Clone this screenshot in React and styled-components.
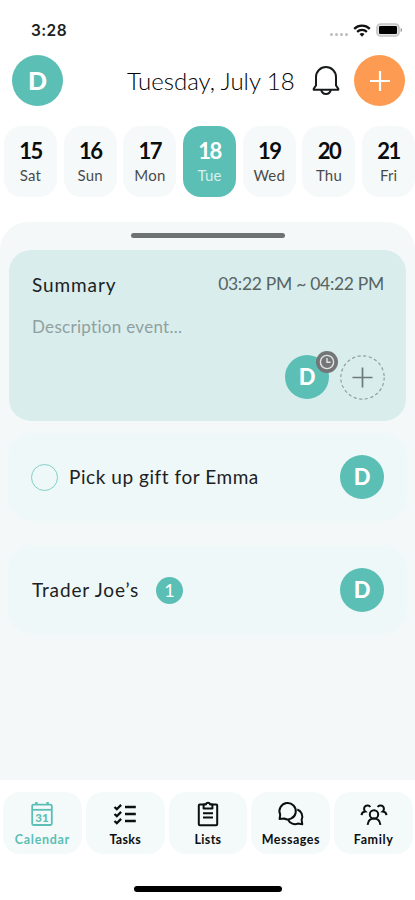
import React from "react";
import styled, { createGlobalStyle } from "styled-components";

const colors = {
    teal: "#5bbfb5",
    orange: "#fd9b52",
    tile: "#f6f9f9",
    sheet: "#f4f8f8",
    summary: "#d9edec",
    row: "#eff8f8",
    ink: "#1c2223",
};

const days = [
    { number: 15, name: "Sat" },
    { number: 16, name: "Sun" },
    { number: 17, name: "Mon" },
    { number: 18, name: "Tue" },
    { number: 19, name: "Wed" },
    { number: 20, name: "Thu" },
    { number: 21, name: "Fri" },
];

const WifiIcon = () => (
    <svg width="18" height="13" viewBox="0 0 18 13" fill="none" stroke="#111" strokeWidth="2.3">
        <path d="M1.2 4.8C5.6.6 12.4.6 16.8 4.8" />
        <path d="M4.1 7.8c2.8-2.6 7-2.6 9.8 0" />
        <path d="M6.5 10l2.5 2.7 2.5-2.7c-1.5-1.2-3.5-1.2-5 0z" fill="#111" stroke="none" />
    </svg>
);

const BatteryIcon = () => (
    <svg width="27" height="14" viewBox="0 0 27 14">
        <rect x="1" y="1" width="22" height="12" rx="3.6" fill="#e4e4e6" stroke="#c4c4c6" strokeWidth="1.6" />
        <rect x="3" y="3" width="18" height="8" rx="1.2" fill="#000" />
        <path d="M24.6 4.8c2 .8 2 3.6 0 4.4z" fill="#999" />
    </svg>
);

const BellIcon = () => (
    <svg width="28" height="32" viewBox="0 0 28 32" fill="none" stroke="#161a1b" strokeWidth="2" strokeLinejoin="round">
        <path d="M4 20.4V12a10 10 0 0 1 20 0v8.4l2.3 3.3v1.1H1.7v-1.1z" />
        <path d="M9.2 25a4.9 4.9 0 0 0 9.6 0" />
    </svg>
);

const PlusIcon = ({ size, color, width }) => (
    <svg width={size} height={size} viewBox="0 0 20 20" stroke={color} strokeWidth={width}>
        <path d="M10 0v20M0 10h20" />
    </svg>
);

const ClockIcon = () => (
    <svg width="16" height="16" viewBox="0 0 16 16" fill="none" stroke="#e2e4e4" strokeWidth="1.4">
        <circle cx="8" cy="8" r="6.6" />
        <path d="M8 4v4.3h3.6" />
    </svg>
);

const DashedRing = () => (
    <svg width="45" height="45" viewBox="0 0 45 45" fill="none">
        <circle cx="22.5" cy="22.5" r="21.7" stroke="#8fa19f" strokeWidth="1.2" strokeDasharray="3.2 2.48" />
        <path d="M22.5 12.5v20M12.5 22.5h20" stroke="#6c7b7a" strokeWidth="1.7" />
    </svg>
);

const CalendarIcon = () => (
    <svg width="26" height="26" viewBox="0 0 26 26" fill="none" stroke="currentColor" strokeWidth="1.8">
        <rect x="3.2" y="3.6" width="19.6" height="20.4" rx="1.2" />
        <path d="M3 8.8h20" />
        <path d="M7.4 1v3M18.6 1v3" strokeWidth="2.4" />
        <text x="13" y="20.8" textAnchor="middle" fontFamily="Lato, sans-serif" fontWeight="900" fontSize="11.5" fill="currentColor" stroke="none">31</text>
    </svg>
);

const TasksIcon = () => (
    <svg width="26" height="26" viewBox="0 0 26 26" fill="none" stroke="currentColor" strokeWidth="2.3">
        <path d="M2.5 6l2.3 2.2 4.3-4.3M2.5 13l2.3 2.2 4.3-4.3M2.5 20l2.3 2.2 4.3-4.3" />
        <path d="M13 6h10.8M13 13h10.8M13 20h10.8" strokeWidth="2.4" />
    </svg>
);

const ListsIcon = () => (
    <svg width="26" height="26" viewBox="0 0 26 26" fill="none" stroke="currentColor" strokeWidth="2" strokeLinejoin="round">
        <rect x="3.8" y="3.6" width="18.4" height="20.6" rx="1" />
        <path d="M8.6 3.4h2.3a2.2 2.2 0 0 1 4.2 0h2.3v4H8.6z" fill="#f4fafa" />
        <path d="M8 12.3h10M8 16.6h10" />
    </svg>
);

const MessagesIcon = () => (
    <svg width="28" height="26" viewBox="0 0 28 26" fill="none" stroke="currentColor" strokeWidth="2" strokeLinejoin="round">
        <path d="M2.6 18l.6-4.4a8.200 8.200 0 1 1 3.800 3.900z" />
        <path d="M20.300 8.500a7.600 7.600 0 0 1 4.300 10.300l.7 4.400-4.500-.6a7.700 7.700 0 0 1-9.600-3.600" />
    </svg>
);

const FamilyIcon = () => (
    <svg width="30" height="26" viewBox="0 0 30 26" fill="none" stroke="currentColor" strokeWidth="2">
        <circle cx="15" cy="13.400" r="4.200" />
        <path d="M8.600 23.800c.5-3.700 3-6.200 6.400-6.200s5.900 2.500 6.400 6.200" />
        <path d="M11.300 6a3.400 3.400 0 1 0-5 4.500c-2.300.2-3.600 1.500-3.800 3.700" />
        <path d="M18.700 6a3.400 3.400 0 1 1 5 4.500c2.300.2 3.600 1.500 3.800 3.700" />
    </svg>
);

const tabs = [
    { label: "Calendar", icon: CalendarIcon, spacing: 0.7 },
    { label: "Tasks", icon: TasksIcon, spacing: 0.3 },
    { label: "Lists", icon: ListsIcon, spacing: 0.3 },
    { label: "Messages", icon: MessagesIcon, spacing: 0.5 },
    { label: "Family", icon: FamilyIcon, spacing: 0.6 },
];

const App = () => {
    return (
        <Screen>
            <GlobalStyle />
            <StatusBar>
                <Clock>3:28</Clock>
                <StatusIcons>
                    <Signal><i /><i /><i /><i /></Signal>
                    <WifiIcon />
                    <BatteryIcon />
                </StatusIcons>
            </StatusBar>
            <Header>
                <Avatar $size={51} $font={25}>D</Avatar>
                <Title>Tuesday, July 18</Title>
                <BellIcon />
                <AddButton>
                    <PlusIcon size={20} color="#fff" width={2.2} />
                </AddButton>
            </Header>
            <Week>
                {days.map((day) => (
                    <Day key={day.number} $active={day.number === 18}>
                        <DayNumber>{day.number}</DayNumber>
                        <DayName>{day.name}</DayName>
                    </Day>
                ))}
            </Week>
            <Sheet>
                <Handle />
                <SummaryCard>
                    <SummaryTop>
                        <Label $spacing={0.9}>Summary</Label>
                        <Hours>03:22 PM ~ 04:22 PM</Hours>
                    </SummaryTop>
                    <Description>Description event...</Description>
                    <People>
                        <AvatarHolder>
                            <Avatar $size={44} $font={22}>D</Avatar>
                            <ClockBadge><ClockIcon /></ClockBadge>
                        </AvatarHolder>
                        <DashedRing />
                    </People>
                </SummaryCard>
                <Row>
                    <Check />
                    <Label $spacing={0.55}>Pick up gift for Emma</Label>
                    <Avatar $size={44} $font={22}>D</Avatar>
                </Row>
                <Row>
                    <Label $spacing={0.85}>Trader Joe’s</Label>
                    <Count>1</Count>
                    <Avatar $size={44} $font={22}>D</Avatar>
                </Row>
            </Sheet>
            <TabBar>
                {tabs.map(({ label, icon: Icon, spacing }) => (
                    <Tab key={label} $active={label === "Calendar"}>
                        <Icon />
                        <TabLabel $spacing={spacing}>{label}</TabLabel>
                    </Tab>
                ))}
            </TabBar>
            <HomeArea><HomeBar /></HomeArea>
        </Screen>
    );
};

const GlobalStyle = createGlobalStyle`
* { box-sizing: border-box; }
body { margin: 0; background: #fff; }
svg { display: block; flex: none; }
`;

const Screen = styled.div`
display: flex;
flex-direction: column;
width: 415px;
height: 900px;
overflow: hidden;
background: #fff;
color: ${colors.ink};
font-family: Lato, "Open Sans", sans-serif;
white-space: nowrap;
`;

const StatusBar = styled.div`
display: flex;
align-items: center;
justify-content: space-between;
height: 55px;
padding: 5px 12px 0 31px;
`;

const Clock = styled.div`
padding-top: 1px;
font: 600 15.5px/20px Inter, sans-serif;
letter-spacing: 0.4px;
`;

const StatusIcons = styled.div`
display: flex;
align-items: center;
gap: 5px;
`;

const Signal = styled.div`
display: flex;
gap: 2px;
padding-top: 8px;
i {
width: 3px;
height: 3px;
border-radius: 50%;
background: #bcbcbc;
}
`;

const Header = styled.div`
display: flex;
align-items: center;
height: 51px;
padding: 0 10px 0 12px;
`;

const Avatar = styled.div`
display: flex;
align-items: center;
justify-content: center;
flex: none;
width: ${(props) => props.$size}px;
height: ${(props) => props.$size}px;
border-radius: 50%;
background: ${colors.teal};
color: #fff;
font-size: ${(props) => props.$font}px;
font-weight: 900;
line-height: 1;
`;

const Title = styled.div`
width: 168px;
margin: 0 17px 0 64px;
font-size: 24px;
font-weight: 300;
line-height: 30px;
letter-spacing: 0;
color: #000;
`;

const AddButton = styled.div`
display: flex;
align-items: center;
justify-content: center;
width: 51px;
height: 51px;
margin-left: auto;
border-radius: 50%;
background: ${colors.orange};
`;

const Week = styled.div`
display: flex;
gap: 6.7px;
padding: 20px 0 25px 4px;
`;

const Day = styled.div`
display: flex;
flex-direction: column;
align-items: center;
flex: none;
width: 53px;
height: 71px;
padding-top: 12px;
border-radius: 18px;
background: ${(props) => (props.$active ? colors.teal : colors.tile)};
color: ${(props) => (props.$active ? "#fff" : "#0b0d0d")};
`;

const DayNumber = styled.div`
font-size: 22px;
font-weight: 700;
line-height: 26px;
letter-spacing: -1.5px;
`;

const DayName = styled.div`
font-size: 15px;
line-height: 22px;
letter-spacing: 0.2px;
opacity: 0.75;
`;

const Sheet = styled.div`
display: flex;
flex-direction: column;
height: 558px;
padding: 11px 9px 0;
border-radius: 28px 28px 0 0;
background: ${colors.sheet};
`;

const Handle = styled.div`
width: 154px;
height: 5px;
margin: 0 auto 12px 122px;
border-radius: 3px;
background: #6d7372;
`;

const SummaryCard = styled.div`
height: 171px;
padding: 23px 22px 0 23px;
border-radius: 22px;
background: ${colors.summary};
`;

const SummaryTop = styled.div`
display: flex;
justify-content: space-between;
height: 24px;
`;

const Label = styled.div`
font-size: 19px;
line-height: 24px;
letter-spacing: ${(props) => props.$spacing}px;
`;

const Hours = styled.div`
padding-top: 1px;
font-size: 17.5px;
line-height: 20px;
letter-spacing: -0.3px;
color: #566463;
`;

const Description = styled.div`
margin-top: 18px;
font-size: 17px;
line-height: 24px;
letter-spacing: 0.3px;
color: #91a09f;
`;

const People = styled.div`
display: flex;
justify-content: flex-end;
gap: 11px;
margin: 16px -1px 0 0;
`;

const AvatarHolder = styled.div`
position: relative;
`;

const ClockBadge = styled.div`
position: absolute;
top: -4px;
right: -9px;
display: flex;
align-items: center;
justify-content: center;
width: 22px;
height: 22px;
border-radius: 50%;
background: #737676;
`;

const Row = styled.div`
display: flex;
align-items: center;
height: 86px;
margin-top: 13px;
padding: 0 22px 0 23px;
border-radius: 22px;
background: ${colors.row};
box-shadow: 0 0 6px ${colors.row};
& + & {
margin-top: 27px;
}
${Avatar} {
margin-left: auto;
}
`;

const Check = styled.div`
width: 27px;
height: 27px;
margin: 0 11px 0 -1px;
border: 1.5px solid #7fd0c6;
border-radius: 50%;
`;

const Count = styled.div`
width: 27px;
height: 27px;
margin-left: 17px;
border-radius: 50%;
background: ${colors.teal};
color: #fff;
font-size: 18px;
line-height: 27px;
text-align: center;
`;

const TabBar = styled.div`
display: flex;
gap: 4px;
padding: 12px 2px 0 3px;
`;

const Tab = styled.div`
display: flex;
flex-direction: column;
align-items: center;
flex: 1 1 0;
height: 62px;
padding-top: 9px;
border-radius: 17px;
background: #f4fafa;
color: ${(props) => (props.$active ? colors.teal : "#0c0f10")};
`;

const TabLabel = styled.div`
margin-top: 4px;
font-size: 12.5px;
font-weight: 700;
line-height: 17px;
letter-spacing: ${(props) => props.$spacing}px;
`;

const HomeArea = styled.div`
display: flex;
justify-content: center;
padding-top: 32px;
`;

const HomeBar = styled.div`
width: 148px;
height: 6px;
border-radius: 3px;
background: #000;
`;

export default App;
